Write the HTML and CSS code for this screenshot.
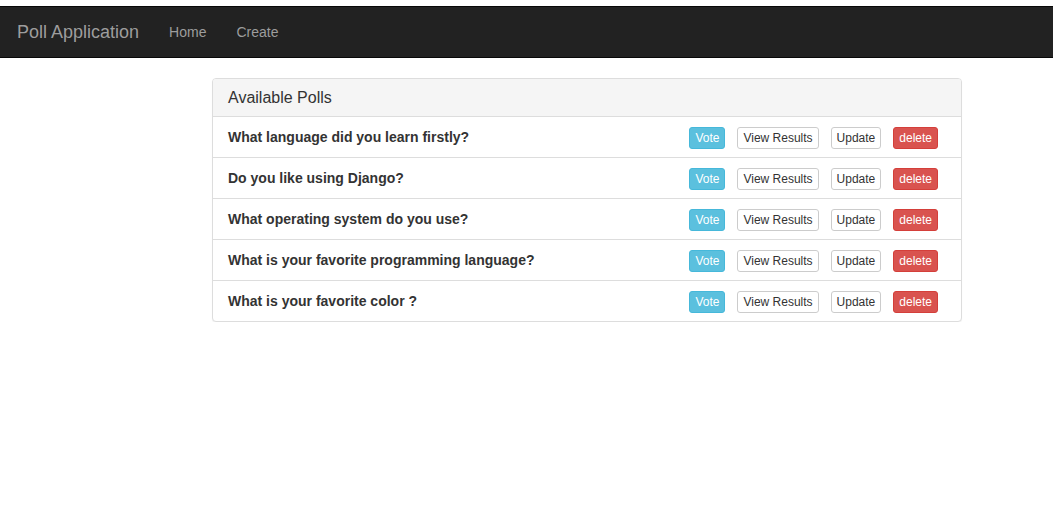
FILE: index.html
```html
<!DOCTYPE html>
<html>
<head>
<meta charset="utf-8">
<link rel="stylesheet" href="styles.css">
</head>
<body>
<nav class="navbar">
  <a class="brand" href="#">Poll Application</a>
  <a class="nav-link" href="#">Home</a>
  <a class="nav-link" href="#">Create</a>
</nav>
<main class="container">
  <section class="panel">
    <div class="panel-heading">Available Polls</div>
    <ul class="list">
      <li class="item"><span class="question">What language did you learn firstly?</span><span class="actions"><a class="btn btn-info">Vote</a><a class="btn btn-default">View Results</a><a class="btn btn-default">Update</a><a class="btn btn-danger">delete</a></span></li>
      <li class="item"><span class="question">Do you like using Django?</span><span class="actions"><a class="btn btn-info">Vote</a><a class="btn btn-default">View Results</a><a class="btn btn-default">Update</a><a class="btn btn-danger">delete</a></span></li>
      <li class="item"><span class="question">What operating system do you use?</span><span class="actions"><a class="btn btn-info">Vote</a><a class="btn btn-default">View Results</a><a class="btn btn-default">Update</a><a class="btn btn-danger">delete</a></span></li>
      <li class="item"><span class="question">What is your favorite programming language?</span><span class="actions"><a class="btn btn-info">Vote</a><a class="btn btn-default">View Results</a><a class="btn btn-default">Update</a><a class="btn btn-danger">delete</a></span></li>
      <li class="item"><span class="question">What is your favorite color ?</span><span class="actions"><a class="btn btn-info">Vote</a><a class="btn btn-default">View Results</a><a class="btn btn-default">Update</a><a class="btn btn-danger">delete</a></span></li>
    </ul>
  </section>
</main>
</body>
</html>
```
FILE: styles.css
```css
* { box-sizing: border-box; }
html, body { margin: 0; padding: 0; background: #fff; }
body {
  font-family: "Liberation Sans", Arial, sans-serif;
  font-size: 14px;
  line-height: 20px;
  color: #333;
  padding-top: 6px;
}
.navbar {
  display: flex;
  align-items: center;
  height: 52px;
  background: #222;
  border-top: 1px solid #080808;
  border-bottom: 1px solid #080808;
  padding: 0 0 0 17px;
}
.brand {
  color: #9d9d9d;
  font-size: 18px;
  line-height: 20px;
  text-decoration: none;
  padding: 15px 15px 15px 0;
}
.nav-link {
  color: #9d9d9d;
  text-decoration: none;
  font-size: 14px;
  padding: 15px;
}
.container {
  width: 750px;
  margin: 20px 0 0 212px;
}
.panel {
  border: 1px solid #ddd;
  border-radius: 4px;
  box-shadow: 0 1px 1px rgba(0,0,0,.05);
  background: #fff;
  overflow: hidden;
}
.panel-heading {
  background: #f5f5f5;
  border-bottom: 1px solid #ddd;
  padding: 10px 15px 9px;
  font-size: 16px;
  line-height: 18px;
  color: #333;
}
.list { list-style: none; margin: 0; padding: 0; }
.item {
  display: flex;
  align-items: center;
  justify-content: space-between;
  padding: 10px 23px 10px 15px;
  height: 41px;
  border-bottom: 1px solid #ddd;
}
.item:last-child { border-bottom: none; height: 40px; }
.question { font-weight: bold; font-size: 14px; }
.actions { display: flex; align-items: center; padding-top: 2px; }
.btn {
  display: inline-block;
  font-size: 12px;
  line-height: 18px;
  padding: 1px 5px;
  border: 1px solid transparent;
  border-radius: 3px;
  margin-left: 12px;
  cursor: pointer;
}
.btn:first-child { margin-left: 0; }
.btn-info { background: #5bc0de; border-color: #46b8da; color: #fff; }
.btn-default { background: #fff; border-color: #ccc; color: #333; }
.btn-danger { background: #d9534f; border-color: #d43f3a; color: #fff; }
```
